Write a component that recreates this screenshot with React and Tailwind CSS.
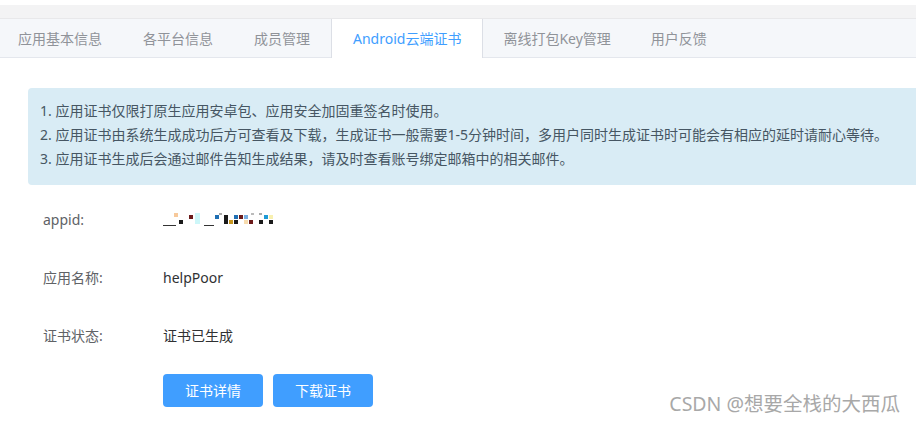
import React from "react";

const tabs = ["应用基本信息", "各平台信息", "成员管理", "Android云端证书", "离线打包Key管理", "用户反馈"];
const activeTab = 3;

const tips = [
  "1. 应用证书仅限打原生应用安卓包、应用安全加固重签名时使用。",
  "2. 应用证书由系统生成成功后方可查看及下载，生成证书一般需要1-5分钟时间，多用户同时生成证书时可能会有相应的延时请耐心等待。",
  "3. 应用证书生成后会通过邮件告知生成结果，请及时查看账号绑定邮箱中的相关邮件。",
];

// 打码的 appid（马赛克色块）
const mosaic = [
  [0, 13, 13, 1, "#333"],
  [11, 1, 4, 4, "#f7c99b"],
  [16, 8, 4, 4, "#1a1a1a"],
  [26, 3, 4, 4, "#6b1a1a"],
  [32, 1, 5, 11, "#cdf7f9"],
  [41, 13, 10, 1, "#333"],
  [52, 3, 4, 4, "#1f6fb3"],
  [61, 3, 4, 9, "#1a1a1a"],
  [66, 8, 4, 4, "#c8961e"],
  [71, 3, 4, 4, "#1f6fb3"],
  [76, 3, 4, 4, "#6b1a1a"],
  [81, 3, 4, 4, "#7aaee0"],
  [71, 8, 4, 4, "#1a1a1a"],
  [81, 8, 4, 4, "#f8dcae"],
  [86, 8, 4, 4, "#6b1a1a"],
  [96, 8, 4, 4, "#1a1a1a"],
  [101, 3, 4, 4, "#1e9ad6"],
  [106, 3, 4, 4, "#f8f0b0"],
  [106, 8, 4, 4, "#1a1a1a"],
  [56, 1, 3, 2, "#aaa"],
  [88, 1, 3, 2, "#bbb"],
  [96, 1, 3, 2, "#aaa"],
];

function Mosaic() {
  return (
    <svg width="112" height="14" viewBox="0 0 112 14">
      {mosaic.map(([x, y, w, h, c], i) => (
        <rect key={i} x={x} y={y} width={w} height={h} fill={c} />
      ))}
    </svg>
  );
}

export default function App() {
  return (
    <div
      className="relative w-[916px] h-[424px] overflow-hidden bg-white"
      style={{ fontFamily: '"Noto Sans", "Noto Sans CJK SC", sans-serif' }}
    >
      {/* 顶部灰条 */}
      <div className="h-[5px] bg-white" />
      <div className="h-[14px] bg-[#f3f3f4] border-b border-[#e8e8ea]" />

      {/* tabs */}
      <div className="flex h-[39px] bg-[#f5f7fa] border-b border-[#e4e7ed]">
        {tabs.map((t, i) => (
          <div
            key={t}
            className={`flex items-center text-[14px] ${
              i === 0 ? "pl-[18px] pr-[21px]" : i === 1 || i === 2 ? "pl-[20px] pr-[21px]" : "px-[20px]"
            } ${
              i === activeTab
                ? "bg-white text-[#409eff] border-x border-[#dcdfe6] -mb-px h-[39px] !px-[21px]"
                : "text-[#909399]"
            }`}
          >
            {t}
          </div>
        ))}
      </div>

      <div className="pl-[28px] pt-[30px]">
        {/* 提示 */}
        <div className="h-[97px] bg-[#d9ecf5] rounded-l-[4px] pl-[12px] pt-[11px] text-[14px] leading-[24px] text-[#465663]">
          {tips.map((t) => (
            <div key={t} className="whitespace-nowrap">{t}</div>
          ))}
        </div>

        {/* 证书信息 */}
        <div className="pl-[15px] pt-[5px] text-[14px]">
          <div className="flex items-center h-[58px]">
            <div className="w-[120px] text-[#606266]">appid:</div>
            <Mosaic />
          </div>
          <div className="flex items-center h-[58px]">
            <div className="w-[120px] text-[#606266]">应用名称:</div>
            <div className="text-[#303133]">helpPoor</div>
          </div>
          <div className="flex items-center h-[58px]">
            <div className="w-[120px] text-[#606266]">证书状态:</div>
            <div className="text-[#303133]">证书已生成</div>
          </div>
          <div className="flex gap-[10px] pl-[120px] mt-[10px]">
            <button className="w-[100px] h-[33px] rounded-[4px] bg-[#409eff] text-white text-[14px]">
              证书详情
            </button>
            <button className="w-[100px] h-[33px] rounded-[4px] bg-[#409eff] text-white text-[14px]">
              下载证书
            </button>
          </div>
        </div>
      </div>

      {/* 水印 */}
      <div className="absolute right-[16px] bottom-[6px] text-[19.5px] text-[#a8a8a8] [text-shadow:0_0_1px_#fff]">
        CSDN @想要全栈的大西瓜
      </div>
    </div>
  );
}
